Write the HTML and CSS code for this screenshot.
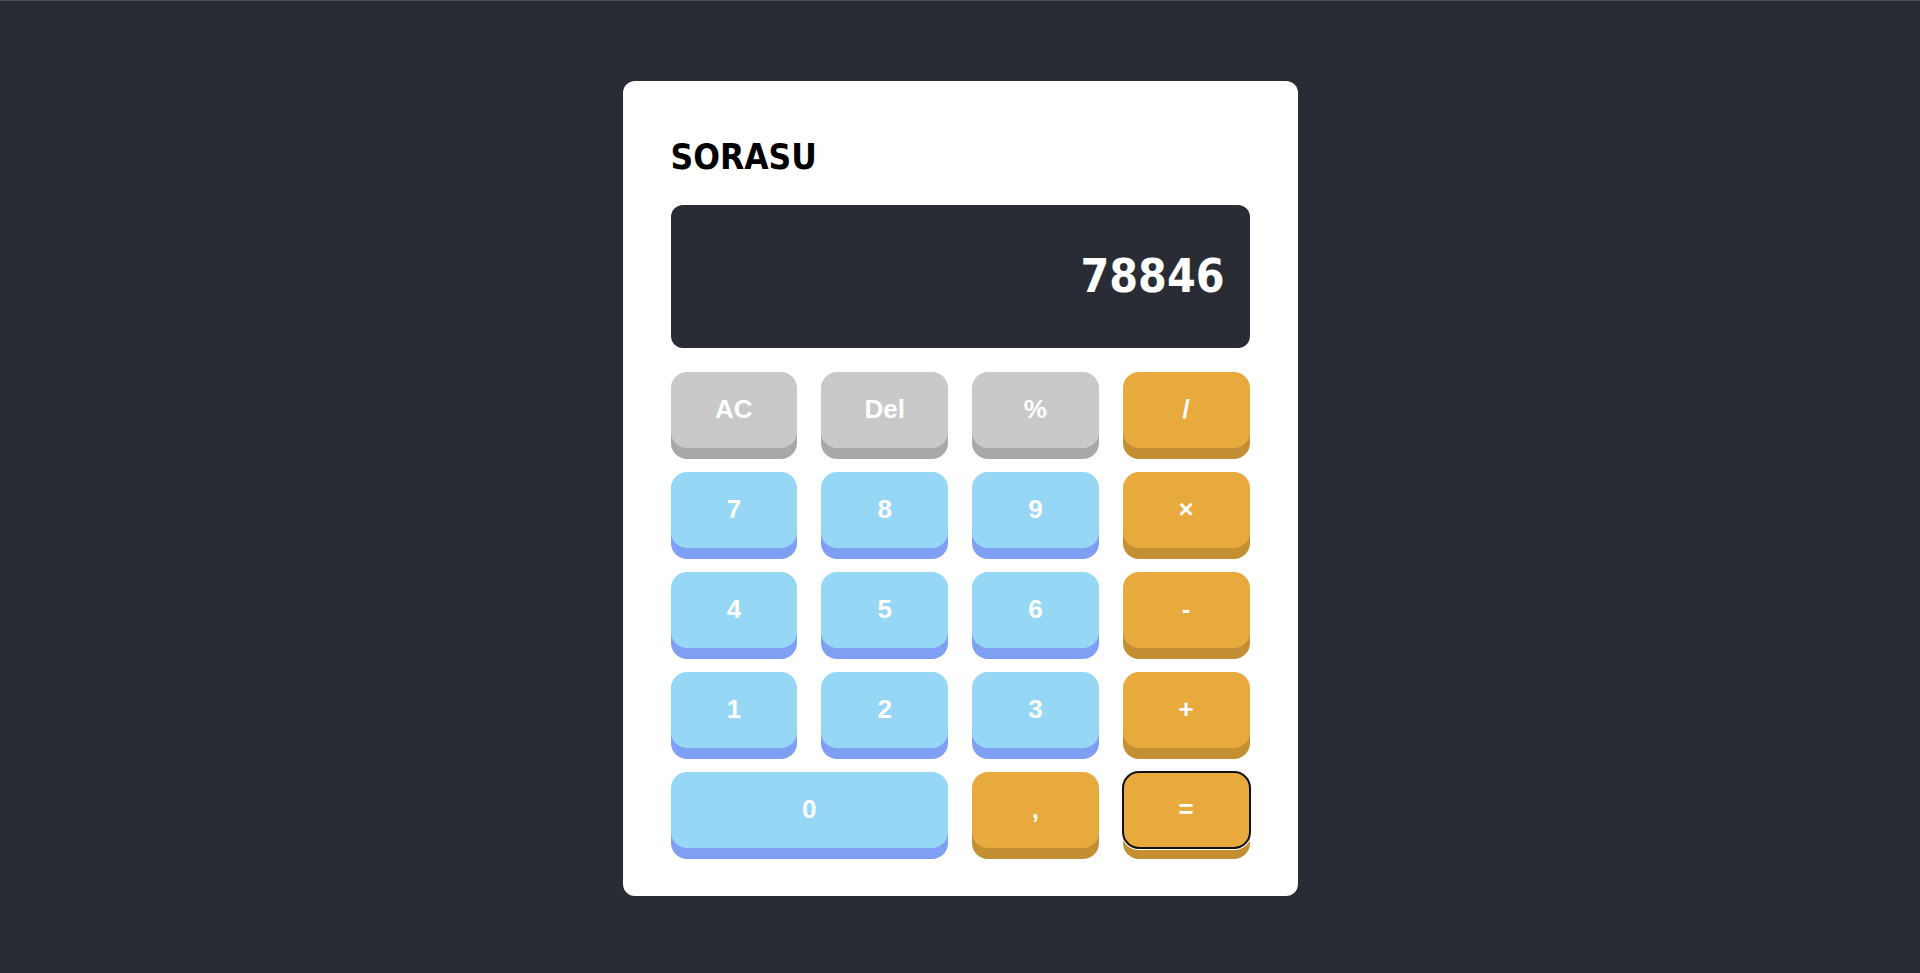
FILE: index.html
```html
<!DOCTYPE html>
<html lang="en">
<head>
<meta charset="utf-8">
<title>Sorasu Calculator</title>
<link rel="stylesheet" href="styles.css">
</head>
<body>
  <main class="calculator">
    <h1 class="brand">SORASU</h1>
    <div class="display"><span class="display-value">78846</span></div>
    <div class="keys">
      <button class="key key-fn">AC</button>
      <button class="key key-fn">Del</button>
      <button class="key key-fn">%</button>
      <button class="key key-op">/</button>
      <button class="key key-num">7</button>
      <button class="key key-num">8</button>
      <button class="key key-num">9</button>
      <button class="key key-op">×</button>
      <button class="key key-num">4</button>
      <button class="key key-num">5</button>
      <button class="key key-num">6</button>
      <button class="key key-op">-</button>
      <button class="key key-num">1</button>
      <button class="key key-num">2</button>
      <button class="key key-num">3</button>
      <button class="key key-op">+</button>
      <button class="key key-num key-wide">0</button>
      <button class="key key-op">,</button>
      <button class="key key-op key-focused">=</button>
    </div>
  </main>
</body>
</html>
```
FILE: styles.css
```css
* {
  box-sizing: border-box;
}

html, body {
  margin: 0;
  padding: 0;
}

body {
  min-height: 100vh;
  background: #292c35;
  border-top: 1px solid #4d4f54;
  padding-top: 2px;
  display: flex;
  align-items: center;
  justify-content: center;
  font-family: "Liberation Sans", Arial, sans-serif;
}

.calculator {
  width: 675px;
  background: #ffffff;
  border-radius: 12px;
  padding: 48px;
}

.brand {
  margin: 0 0 20px;
  font-family: "DejaVu Sans", sans-serif;
  font-stretch: condensed;
  font-weight: 700;
  font-size: 35px;
  line-height: 56px;
  color: #000000;
}

.display {
  height: 143px;
  background: #292c35;
  border-radius: 12px;
  display: flex;
  align-items: center;
  justify-content: flex-end;
  padding-right: 25px;
}

.display-value {
  font-family: "DejaVu Sans", sans-serif;
  font-stretch: condensed;
  font-weight: 700;
  font-size: 46px;
  color: #ffffff;
}

.keys {
  margin-top: 24px;
  display: grid;
  grid-template-columns: repeat(4, 1fr);
  grid-auto-rows: 76px;
  gap: 24px;
}

.key {
  border: none;
  border-radius: 16px;
  font-family: "Liberation Sans", Arial, sans-serif;
  font-weight: 700;
  font-size: 26px;
  color: #ffffff;
  padding: 0;
  cursor: pointer;
}

.key-fn {
  background: #c9c9c9;
  box-shadow: 0 11px 0 #a8a8a8;
}

.key-num {
  background: #96d7f6;
  box-shadow: 0 11px 0 #7f9ff5;
}

.key-op {
  background: #e8a93d;
  box-shadow: 0 11px 0 #c48f33;
}

.key-wide {
  grid-column: span 2;
}

.key-focused {
  outline: 2px solid #101010;
  outline-offset: -1px;
  box-shadow: 0 0 0 2px #ffffff, 0 11px 0 #c48f33;
}
```
